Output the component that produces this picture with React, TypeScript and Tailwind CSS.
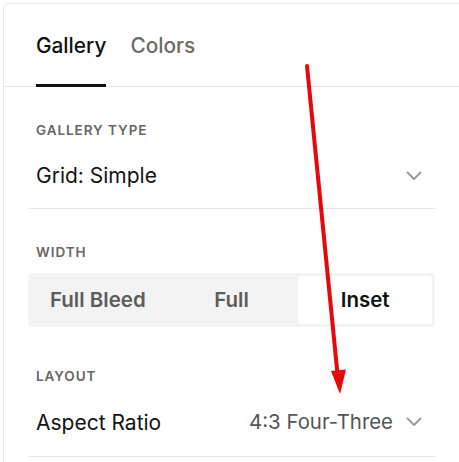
import React from "react";

const Chevron = () => (
  <svg width="16" height="10" viewBox="0 0 16 10" className="shrink-0">
    <path d="M1.5 1.5 L8 8 L14.5 1.5" fill="none" stroke="#9a9a9a" strokeWidth="1.8" strokeLinecap="round" strokeLinejoin="round" />
  </svg>
);

export default function App() {
  return (
    <div className="relative w-[459px] h-[462px] overflow-hidden bg-white" style={{ fontFamily: "Inter, 'Liberation Sans', sans-serif" }}>
      <div className="ml-[3px] mt-[3px] h-[470px] border-t border-l border-[#e8e8e8] rounded-tl-[6px]">
        {/* Tabs */}
        <div className="flex h-[83px] border-b border-[#e6e6e6] pl-[32px] gap-[24px]">
          <div className="relative flex flex-col pt-[28px]">
            <span className="text-[20.8px] leading-[28px] font-medium text-[#111]">Gallery</span>
            <div className="absolute left-0 right-0 bottom-[-1px] h-[3px] bg-[#111]" />
          </div>
          <div className="flex flex-col pt-[28px]">
            <span className="text-[20.8px] leading-[28px] font-medium text-[#6b6b6b]">Colors</span>
          </div>
        </div>

        <div className="pl-[25px] pr-[24px]">
          {/* Gallery type */}
          <div className="pt-[35px] pl-[7px] text-[13.5px] leading-[16px] font-semibold tracking-[0.07em] text-[#666]">GALLERY TYPE</div>
          <div className="mt-[5px] h-[66px] flex items-center justify-between pl-[7px] pr-[13px] border-b border-[#e6e6e6]">
            <span className="text-[21px] text-[#141414]">Grid: Simple</span>
            <Chevron />
          </div>

          {/* Width */}
          <div className="pt-[35px] pl-[7px] text-[13.5px] leading-[16px] font-semibold tracking-[0.07em] text-[#666]">WIDTH</div>
          <div className="mt-[13px] ml-[-1px] h-[54px] rounded-[5px] bg-[#f3f3f3] p-[3px] grid grid-cols-3">
            <div className="flex items-center justify-center text-[20.5px] font-semibold text-[#5c5c5c]">Full Bleed</div>
            <div className="flex items-center justify-center text-[20.5px] font-semibold text-[#5c5c5c]">Full</div>
            <div className="flex items-center justify-center rounded-[4px] bg-white text-[20.5px] font-semibold text-[#111]">Inset</div>
          </div>

          {/* Layout */}
          <div className="pt-[41px] pl-[7px] text-[13.5px] leading-[16px] font-semibold tracking-[0.07em] text-[#666]">LAYOUT</div>
          <div className="mt-[5px] h-[68px] flex items-center justify-between pl-[7px] pr-[13px] border-b border-[#e6e6e6]">
            <span className="text-[21px] text-[#141414]">Aspect Ratio</span>
            <div className="flex items-center gap-[13px]">
              <span className="text-[20.4px] text-[#555]">4:3 Four-Three</span>
              <Chevron />
            </div>
          </div>
        </div>
      </div>

      {/* Red annotation arrow */}
      <svg className="absolute left-0 top-0 pointer-events-none" width="459" height="462" viewBox="0 0 459 462">
        <line x1="307" y1="66" x2="337.5" y2="374" stroke="#e8080c" strokeWidth="4" strokeLinecap="round" />
        <polygon points="331,371 346,369.5 340,394" fill="#e8080c" />
      </svg>
    </div>
  );
}
